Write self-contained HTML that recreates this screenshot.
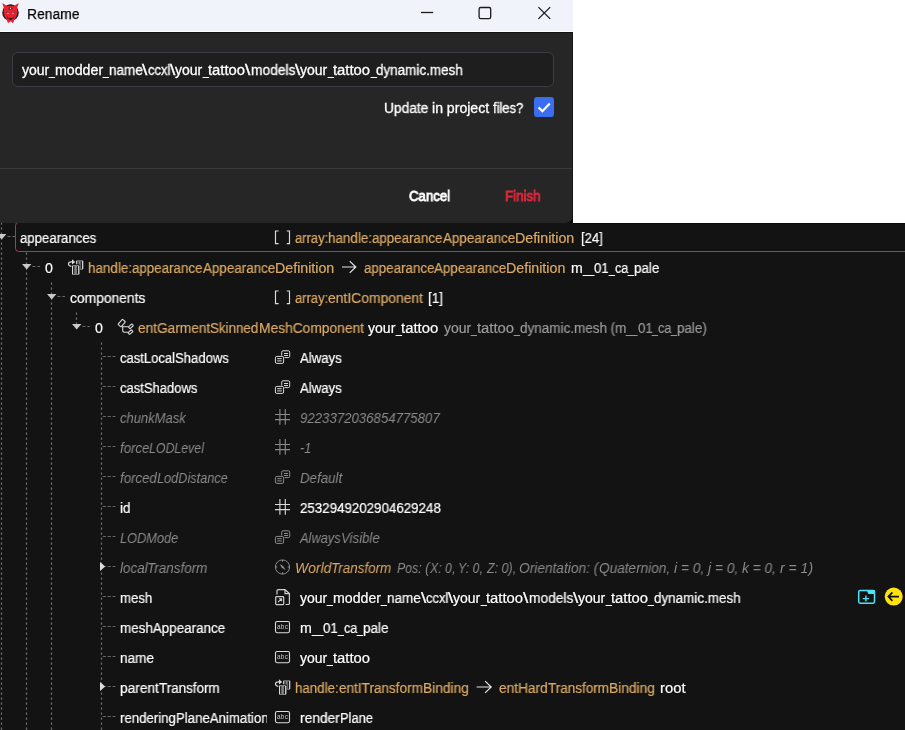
<!DOCTYPE html>
<html><head><meta charset="utf-8"><title>Rename</title>
<style>
html,body{margin:0;padding:0}
body{width:905px;height:730px;position:relative;overflow:hidden;background:#fff;font-family:"Liberation Sans",sans-serif;font-size:14px}
#tree{position:absolute;left:0;top:222.8px;width:905px;height:508px;background:#131313;overflow:hidden}
#sel{position:absolute;left:14.9px;top:-0.8px;width:900px;height:30px;border:1.25px solid #dc2637;border-radius:3.5px;box-sizing:border-box}
#dlg{position:absolute;left:0;top:0;width:573px;height:222.8px;background:#262626;border-radius:0 0 8px 0;overflow:hidden}
#edge{position:absolute;left:572px;top:32px;width:1px;height:191px;background:#151515}
#corner{position:absolute;left:555px;top:205px;width:18px;height:18px;background:#0b0b0b}
#shade{position:absolute;left:573px;top:222.7px;width:332px;height:1.1px;background:#0a0a0a}
#bar{position:absolute;left:0;top:0;width:573px;height:30.6px;background:#f0f3f9;border-bottom:1.2px solid #fdfdff;box-shadow:0 0.8px 0 #0e0e0e}
#inp{position:absolute;left:12px;top:52px;width:542px;height:34.5px;box-sizing:border-box;border:1px solid #3c3c44;border-radius:6px;background:#1e1e1e}
#sep{position:absolute;left:0;top:168px;width:573px;height:1px;background:#3b3b3b}
.t{will-change:transform;font-size:14px;-webkit-text-stroke:0.2px;position:absolute;white-space:pre;line-height:20px;height:20px;transform-origin:0 50%}
#clip{position:absolute;left:118px;top:708px;width:148.9px;height:22px;overflow:hidden}
#clip .t{left:2.2px;top:0;color:#ffffff;transform:scaleX(0.945)}
svg{position:absolute;left:0;top:0;will-change:transform}
</style></head>
<body>
<div id="tree"><div id="sel"></div></div>
<div id="corner"></div><div id="shade"></div>
<div id="dlg"><div id="bar"></div><div id="inp"></div><div id="sep"></div><div id="edge"></div></div>
<svg width="905" height="730" viewBox="0 0 905 730">
<line x1="1.5" y1="223" x2="1.5" y2="730" stroke="#727272" stroke-width="1.2" stroke-dasharray="2.2 2.8" stroke-dashoffset="0.40"/>
<line x1="26.5" y1="252.5" x2="26.5" y2="730" stroke="#727272" stroke-width="1.2" stroke-dasharray="2.2 2.8" stroke-dashoffset="4.90"/>
<line x1="51.5" y1="282.5" x2="51.5" y2="730" stroke="#727272" stroke-width="1.2" stroke-dasharray="2.2 2.8" stroke-dashoffset="4.90"/>
<line x1="76.5" y1="312.5" x2="76.5" y2="324" stroke="#727272" stroke-width="1.2" stroke-dasharray="2.2 2.8" stroke-dashoffset="4.90"/>
<line x1="101.5" y1="342.5" x2="101.5" y2="730" stroke="#727272" stroke-width="1.2" stroke-dasharray="2.2 2.8" stroke-dashoffset="4.90"/>
<line x1="7.4" y1="236.5" x2="15" y2="236.5" stroke="#666666" stroke-width="1.2" stroke-dasharray="3.1 1.8"/>
<line x1="32.4" y1="266.5" x2="40" y2="266.5" stroke="#666666" stroke-width="1.2" stroke-dasharray="3.1 1.8"/>
<line x1="57.4" y1="296.5" x2="65" y2="296.5" stroke="#666666" stroke-width="1.2" stroke-dasharray="3.1 1.8"/>
<line x1="82.4" y1="326.5" x2="90" y2="326.5" stroke="#666666" stroke-width="1.2" stroke-dasharray="3.1 1.8"/>
<line x1="102.8" y1="356.5" x2="115.4" y2="356.5" stroke="#666666" stroke-width="1.2" stroke-dasharray="3.1 1.8"/>
<line x1="102.8" y1="386.5" x2="115.4" y2="386.5" stroke="#666666" stroke-width="1.2" stroke-dasharray="3.1 1.8"/>
<line x1="102.8" y1="416.5" x2="115.4" y2="416.5" stroke="#666666" stroke-width="1.2" stroke-dasharray="3.1 1.8"/>
<line x1="102.8" y1="446.5" x2="115.4" y2="446.5" stroke="#666666" stroke-width="1.2" stroke-dasharray="3.1 1.8"/>
<line x1="102.8" y1="476.5" x2="115.4" y2="476.5" stroke="#666666" stroke-width="1.2" stroke-dasharray="3.1 1.8"/>
<line x1="102.8" y1="506.5" x2="115.4" y2="506.5" stroke="#666666" stroke-width="1.2" stroke-dasharray="3.1 1.8"/>
<line x1="102.8" y1="536.5" x2="115.4" y2="536.5" stroke="#666666" stroke-width="1.2" stroke-dasharray="3.1 1.8"/>
<line x1="102.8" y1="566.5" x2="115.4" y2="566.5" stroke="#666666" stroke-width="1.2" stroke-dasharray="3.1 1.8"/>
<line x1="102.8" y1="596.5" x2="115.4" y2="596.5" stroke="#666666" stroke-width="1.2" stroke-dasharray="3.1 1.8"/>
<line x1="102.8" y1="626.5" x2="115.4" y2="626.5" stroke="#666666" stroke-width="1.2" stroke-dasharray="3.1 1.8"/>
<line x1="102.8" y1="656.5" x2="115.4" y2="656.5" stroke="#666666" stroke-width="1.2" stroke-dasharray="3.1 1.8"/>
<line x1="102.8" y1="686.5" x2="115.4" y2="686.5" stroke="#666666" stroke-width="1.2" stroke-dasharray="3.1 1.8"/>
<line x1="102.8" y1="716.5" x2="115.4" y2="716.5" stroke="#666666" stroke-width="1.2" stroke-dasharray="3.1 1.8"/>
<polygon points="-3.0,234 6.4,234 1.7,239.4" fill="#c8c8c8"/>
<polygon points="22.0,264 31.4,264 26.7,269.4" fill="#c8c8c8"/>
<polygon points="47.0,294 56.400000000000006,294 51.7,299.4" fill="#c8c8c8"/>
<polygon points="72.0,324 81.4,324 76.7,329.4" fill="#c8c8c8"/>
<polygon points="100,562.0 105.2,566.5 100,571.0" fill="#dddddd"/>
<polygon points="100,682.0 105.2,686.5 100,691.0" fill="#dddddd"/>
<path d="M278.6,231 H275.5 V243.6 H278.6 M286.8,231 H289.5 V243.6 H286.8" fill="none" stroke="#dcdcdc" stroke-width="1.15"/>
<path d="M278.6,291 H275.5 V303.6 H278.6 M286.8,291 H289.5 V303.6 H286.8" fill="none" stroke="#dcdcdc" stroke-width="1.15"/>
<g transform="translate(0,0)"><rect x="76.2" y="260.2" width="7" height="9.6" rx="1.2" fill="#838383"/><rect x="77.3" y="261.3" width="1.2" height="8" fill="#131313"/><rect x="80.7" y="261.3" width="1.2" height="7.4" fill="#131313"/><rect x="76.2" y="260.9" width="1" height="8.2" fill="#dcdcdc"/><rect x="82.1" y="260.9" width="1.1" height="8.2" fill="#dcdcdc"/><rect x="71.2" y="264.3" width="8.8" height="11.4" rx="1.4" fill="#131313"/><rect x="72" y="265.1" width="7.3" height="9.9" rx="1.2" fill="#838383"/><rect x="73.1" y="266.2" width="1.2" height="7.7" fill="#131313"/><rect x="76.9" y="266.2" width="1.2" height="7.7" fill="#131313"/><rect x="72" y="265.9" width="1.05" height="8.3" fill="#dcdcdc"/><rect x="78.2" y="265.9" width="1.1" height="8.3" fill="#dcdcdc"/><path d="M71.3,266.4 C67.4,265.8 67.4,261.7 72,261.9" stroke="#dcdcdc" stroke-width="1.15" fill="none"/><polygon points="72,259.3 75.2,262 72,264.6" fill="#dcdcdc"/></g>
<g transform="translate(207,420)"><rect x="76.2" y="260.2" width="7" height="9.6" rx="1.2" fill="#838383"/><rect x="77.3" y="261.3" width="1.2" height="8" fill="#131313"/><rect x="80.7" y="261.3" width="1.2" height="7.4" fill="#131313"/><rect x="76.2" y="260.9" width="1" height="8.2" fill="#dcdcdc"/><rect x="82.1" y="260.9" width="1.1" height="8.2" fill="#dcdcdc"/><rect x="71.2" y="264.3" width="8.8" height="11.4" rx="1.4" fill="#131313"/><rect x="72" y="265.1" width="7.3" height="9.9" rx="1.2" fill="#838383"/><rect x="73.1" y="266.2" width="1.2" height="7.7" fill="#131313"/><rect x="76.9" y="266.2" width="1.2" height="7.7" fill="#131313"/><rect x="72" y="265.9" width="1.05" height="8.3" fill="#dcdcdc"/><rect x="78.2" y="265.9" width="1.1" height="8.3" fill="#dcdcdc"/><path d="M71.3,266.4 C67.4,265.8 67.4,261.7 72,261.9" stroke="#dcdcdc" stroke-width="1.15" fill="none"/><polygon points="72,259.3 75.2,262 72,264.6" fill="#dcdcdc"/></g>
<g transform="translate(0,0)" fill="none" stroke="#dcdcdc" stroke-width="1.1"><rect x="-3.4" y="-2" width="6.8" height="4" rx="0.6" transform="translate(121.7,323.1) rotate(-48)"/><path d="M122.7,326 V330.6 Q122.7,332.3 124.4,332.3 H128 M122.7,326.7 H128.2"/><rect x="-2.3" y="-1.2" width="4.6" height="2.4" rx="0.5" transform="translate(130.9,326.3) rotate(-42)"/><rect x="-2.3" y="-1.2" width="4.6" height="2.4" rx="0.5" transform="translate(130.5,332.1) rotate(-42)"/></g>
<g transform="translate(0,0)" fill="none" stroke="#dcdcdc" stroke-width="1"><rect x="281.7" y="350.8" width="8" height="6.8" rx="1.4"/><path d="M284,353.5 H288 M284,355.5 H288"/><rect x="274.9" y="355.4" width="9.6" height="9" rx="1.4" fill="#131313" stroke="none"/><rect x="275.4" y="356.4" width="8.2" height="7" rx="1.4"/><path d="M277.2,358.7 H281.8 M277.2,360.9 H281.8"/></g>
<g transform="translate(0,30)" fill="none" stroke="#dcdcdc" stroke-width="1"><rect x="281.7" y="350.8" width="8" height="6.8" rx="1.4"/><path d="M284,353.5 H288 M284,355.5 H288"/><rect x="274.9" y="355.4" width="9.6" height="9" rx="1.4" fill="#131313" stroke="none"/><rect x="275.4" y="356.4" width="8.2" height="7" rx="1.4"/><path d="M277.2,358.7 H281.8 M277.2,360.9 H281.8"/></g>
<g transform="translate(0,120)" fill="none" stroke="#8c8c8c" stroke-width="1"><rect x="281.7" y="350.8" width="8" height="6.8" rx="1.4"/><path d="M284,353.5 H288 M284,355.5 H288"/><rect x="274.9" y="355.4" width="9.6" height="9" rx="1.4" fill="#131313" stroke="none"/><rect x="275.4" y="356.4" width="8.2" height="7" rx="1.4"/><path d="M277.2,358.7 H281.8 M277.2,360.9 H281.8"/></g>
<g transform="translate(0,180)" fill="none" stroke="#8c8c8c" stroke-width="1"><rect x="281.7" y="350.8" width="8" height="6.8" rx="1.4"/><path d="M284,353.5 H288 M284,355.5 H288"/><rect x="274.9" y="355.4" width="9.6" height="9" rx="1.4" fill="#131313" stroke="none"/><rect x="275.4" y="356.4" width="8.2" height="7" rx="1.4"/><path d="M277.2,358.7 H281.8 M277.2,360.9 H281.8"/></g>
<path d="M275,414.5 H290 M275,419.6 H290 M279.9,409 V424.8 M285.3,409 V424.8" stroke="#8c8c8c" stroke-width="1.1" fill="none"/>
<path d="M275,444.5 H290 M275,449.6 H290 M279.9,439 V454.8 M285.3,439 V454.8" stroke="#8c8c8c" stroke-width="1.1" fill="none"/>
<path d="M275,504.5 H290 M275,509.6 H290 M279.9,499 V514.8 M285.3,499 V514.8" stroke="#dcdcdc" stroke-width="1.1" fill="none"/>
<g fill="none" stroke="#8c8c8c" stroke-width="1"><circle cx="282.5" cy="567" r="7.1"/><path d="M282.5,560 v1.8 M282.5,574 v-1.8 M275.5,567 h1.8 M289.5,567 h-1.8" stroke-width="1"/><path d="M279.6,564 L283.4,566.2 L285.6,570 L281.7,567.8 Z" fill="#8c8c8c" stroke="none"/></g>
<g transform="translate(0,0)" fill="none" stroke="#cfcfcf" stroke-width="1.2"><path d="M277,594.6 V590.8 Q277,589.7 278.1,589.7 H285 L289.4,593.6 V603.4 Q289.4,604.5 288.3,604.5 H285.6"/><path d="M285,589.9 V593.6 H289.3"/><rect x="275.7" y="596.6" width="8" height="8" rx="0.8"/><path d="M278,602.2 L281.5,598.8 M279,598.7 H281.6 V601.3" stroke-width="1.1"/></g>
<rect x="275.5" y="621.5" width="14" height="11.2" rx="1.6" fill="none" stroke="#dcdcdc" stroke-width="1.1"/>
<text x="282.6" y="629.2" font-family="Liberation Sans, sans-serif" font-size="6.4" fill="#c8c8c8" text-anchor="middle" letter-spacing="0.3">abc</text>
<rect x="275.5" y="651.5" width="14" height="11.2" rx="1.6" fill="none" stroke="#dcdcdc" stroke-width="1.1"/>
<text x="282.6" y="659.2" font-family="Liberation Sans, sans-serif" font-size="6.4" fill="#c8c8c8" text-anchor="middle" letter-spacing="0.3">abc</text>
<rect x="275.5" y="711.5" width="14" height="11.2" rx="1.6" fill="none" stroke="#dcdcdc" stroke-width="1.1"/>
<text x="282.6" y="719.2" font-family="Liberation Sans, sans-serif" font-size="6.4" fill="#c8c8c8" text-anchor="middle" letter-spacing="0.3">abc</text>
<path d="M342,267 H356 M349.7,261.1 L355.8,267 L349.7,272.9" fill="none" stroke="#e6e6e6" stroke-width="1.2"/>
<path d="M476.6,687 H491.4 M485.09999999999997,681.1 L491.2,687 L485.09999999999997,692.9" fill="none" stroke="#e6e6e6" stroke-width="1.2"/>
<g><rect x="858.7" y="590.4" width="15.8" height="12.8" rx="1.4" fill="none" stroke="#4fe3f7" stroke-width="1.5"/><path d="M866.6,590 H875 V594 H868.4 Z" fill="#4fe3f7"/><path d="M862.8,598.6 H869 M865.9,595.6 V601.6" stroke="#4fe3f7" stroke-width="1.4" fill="none"/></g>
<circle cx="893.7" cy="596.6" r="9" fill="#ffe30f"/><path d="M888.6,596.6 H899 M892.4,592.4 L888.4,596.6 L892.4,600.8" stroke="#111" stroke-width="1.7" fill="none"/>
<path d="M421,12.5 H433.2" stroke="#1a1a1a" stroke-width="1.3"/>
<rect x="479.1" y="7.5" width="11.6" height="11.2" rx="1.6" fill="none" stroke="#1a1a1a" stroke-width="1.3"/>
<path d="M538.4,7.1 L550.2,18.9 M550.2,7.1 L538.4,18.9" stroke="#1a1a1a" stroke-width="1.3"/>
<rect x="534" y="97" width="20" height="20" rx="3" fill="#3a6df0"/><path d="M538.6,107.4 L542.4,111.2 L549.8,103.4" fill="none" stroke="#fff" stroke-width="2.2"/>
<g><circle cx="10.5" cy="12.7" r="8.3" fill="#222"/><path d="M2.2,3 L7.4,6.2 Q10.5,5.4 13.6,6.2 L18.8,3 L16.9,8.6 Q18.1,12.4 16.4,16.2 L14.3,19.4 L13.4,22.4 L12.5,23.1 L11.6,22 L10.5,21.3 L9.4,22 L8.5,23.1 L7.6,22.4 L6.7,19.4 L4.6,16.2 Q2.9,12.4 4.1,8.6 Z" fill="#e8212f"/><path d="M7,5.7 Q10.5,3.3 14,5.7 Q10.5,6.3 7,5.7 Z" fill="#222"/><ellipse cx="10.5" cy="8.6" rx="2" ry="1.05" fill="#5a1218"/><circle cx="10.5" cy="8.55" r="0.7" fill="#e6e6e6"/><path d="M6,12.3 Q8,11.4 9.8,13 Q8,14.4 6,13.6 Z" fill="#5a1218" opacity="0.7"/><path d="M15,12.3 Q13,11.4 11.2,13 Q13,14.4 15,13.6 Z" fill="#5a1218" opacity="0.7"/><ellipse cx="7.9" cy="13.3" rx="1.4" ry="0.7" fill="#a8a8a8"/><ellipse cx="13.1" cy="13.3" rx="1.4" ry="0.7" fill="#a8a8a8"/><path d="M8.4,17.8 Q10.5,18.4 12.6,17.8 Q12,19.9 10.5,19.9 Q9,19.9 8.4,17.8 Z" fill="#1d1d1d"/><path d="M7,16.6 Q7.4,18.4 8.6,19.2 M14,16.6 Q13.6,18.4 12.4,19.2" stroke="#5a1218" stroke-width="0.7" fill="none"/></g>
</svg>
<div><span class="t" style="left:27.4px;top:4.4px;color:#000000;transform:scaleX(0.8960);font-size:15.5px;-webkit-text-stroke:0.25px;">Rename</span></div>
<div><span class="t" style="left:21.8px;top:60.0px;color:#ffffff;transform:scaleX(1.0023);-webkit-text-stroke:0.3px;">your</span><span class="t" style="left:49.0px;top:60.0px;color:#ffffff;transform:scaleX(0.7323);-webkit-text-stroke:0.3px;">_</span><span class="t" style="left:54.8px;top:60.0px;color:#ffffff;transform:scaleX(1.0133);-webkit-text-stroke:0.3px;">modder</span><span class="t" style="left:102.9px;top:60.0px;color:#ffffff;transform:scaleX(0.7323);-webkit-text-stroke:0.3px;">_</span><span class="t" style="left:108.6px;top:60.0px;color:#ffffff;transform:scaleX(0.9658);-webkit-text-stroke:0.3px;">name</span><span class="t" style="left:142.4px;top:60.0px;color:#ffffff;transform:scaleX(1.3579);-webkit-text-stroke:0.3px;">\</span><span class="t" style="left:147.7px;top:60.0px;color:#ffffff;transform:scaleX(0.9267);-webkit-text-stroke:0.3px;">ccxl</span><span class="t" style="left:170.0px;top:60.0px;color:#ffffff;transform:scaleX(1.3579);-webkit-text-stroke:0.3px;">\</span><span class="t" style="left:175.3px;top:60.0px;color:#ffffff;transform:scaleX(1.0023);-webkit-text-stroke:0.3px;">your</span><span class="t" style="left:202.6px;top:60.0px;color:#ffffff;transform:scaleX(0.7323);-webkit-text-stroke:0.3px;">_</span><span class="t" style="left:208.3px;top:60.0px;color:#ffffff;transform:scaleX(1.0596);-webkit-text-stroke:0.3px;">tattoo</span><span class="t" style="left:245.4px;top:60.0px;color:#ffffff;transform:scaleX(1.3579);-webkit-text-stroke:0.3px;">\</span><span class="t" style="left:250.7px;top:60.0px;color:#ffffff;transform:scaleX(0.9829);-webkit-text-stroke:0.3px;">models</span><span class="t" style="left:295.1px;top:60.0px;color:#ffffff;transform:scaleX(1.3579);-webkit-text-stroke:0.3px;">\</span><span class="t" style="left:300.4px;top:60.0px;color:#ffffff;transform:scaleX(1.0023);-webkit-text-stroke:0.3px;">your</span><span class="t" style="left:327.7px;top:60.0px;color:#ffffff;transform:scaleX(0.7323);-webkit-text-stroke:0.3px;">_</span><span class="t" style="left:333.4px;top:60.0px;color:#ffffff;transform:scaleX(1.0596);-webkit-text-stroke:0.3px;">tattoo</span><span class="t" style="left:370.5px;top:60.0px;color:#ffffff;transform:scaleX(0.7323);-webkit-text-stroke:0.3px;">_</span><span class="t" style="left:376.2px;top:60.0px;color:#ffffff;transform:scaleX(0.9609);-webkit-text-stroke:0.3px;">dynamic.mesh</span></div>
<div><span class="t" style="left:383.9px;top:97.5px;color:#ffffff;transform:scaleX(0.9829);-webkit-text-stroke:0.3px;">Update </span><span class="t" style="left:432.2px;top:97.5px;color:#ffffff;transform:scaleX(1.0057);-webkit-text-stroke:0.3px;">in project </span><span class="t" style="left:493.2px;top:97.5px;color:#ffffff;transform:scaleX(0.9221);-webkit-text-stroke:0.3px;">files?</span></div>
<div><span class="t" style="left:409.4px;top:186.0px;color:#ffffff;transform:scaleX(0.9428);-webkit-text-stroke:0.85px;">Cancel</span></div>
<div><span class="t" style="left:505.4px;top:186.0px;color:#e0283c;transform:scaleX(0.9529);-webkit-text-stroke:0.85px;">Finish</span></div>
<div><span class="t" style="left:19.9px;top:228.0px;color:#ffffff;transform:scaleX(0.9413);">appearances</span></div>
<div><span class="t" style="left:294.9px;top:228.0px;color:#dcaa64;transform:scaleX(0.9257);">array:</span><span class="t" style="left:328.1px;top:228.0px;color:#dcaa64;transform:scaleX(0.9594);">handle:</span><span class="t" style="left:372.2px;top:228.0px;color:#dcaa64;transform:scaleX(0.9509);">appearance</span><span class="t" style="left:442.5px;top:228.0px;color:#dcaa64;transform:scaleX(0.9559);">Appearance</span><span class="t" style="left:514.7px;top:228.0px;color:#dcaa64;transform:scaleX(1.0155);">Definition</span></div>
<div><span class="t" style="left:580.5px;top:228.0px;color:#ffffff;transform:scaleX(0.9290);">[24]</span></div>
<div><span class="t" style="left:44.5px;top:258.0px;color:#ffffff;transform:scaleX(1.0132);">0</span></div>
<div><span class="t" style="left:88.1px;top:258.0px;color:#dcaa64;transform:scaleX(0.9596);">handle:</span><span class="t" style="left:132.2px;top:258.0px;color:#dcaa64;transform:scaleX(0.9511);">appearance</span><span class="t" style="left:202.6px;top:258.0px;color:#dcaa64;transform:scaleX(0.9561);">Appearance</span><span class="t" style="left:274.8px;top:258.0px;color:#dcaa64;transform:scaleX(1.0156);">Definition</span></div>
<div><span class="t" style="left:363.8px;top:258.0px;color:#dcaa64;transform:scaleX(0.9514);">appearance</span><span class="t" style="left:434.1px;top:258.0px;color:#dcaa64;transform:scaleX(0.9565);">Appearance</span><span class="t" style="left:506.3px;top:258.0px;color:#dcaa64;transform:scaleX(1.0160);">Definition</span></div>
<div><span class="t" style="left:571.3px;top:258.0px;color:#ffffff;transform:scaleX(1.0047);">m</span><span class="t" style="left:583.1px;top:258.0px;color:#ffffff;transform:scaleX(0.7256);">__</span><span class="t" style="left:594.4px;top:258.0px;color:#ffffff;transform:scaleX(0.9425);">01</span><span class="t" style="left:609.1px;top:258.0px;color:#ffffff;transform:scaleX(0.7249);">_</span><span class="t" style="left:614.7px;top:258.0px;color:#ffffff;transform:scaleX(0.8937);">ca</span><span class="t" style="left:627.9px;top:258.0px;color:#ffffff;transform:scaleX(0.7249);">_</span><span class="t" style="left:633.6px;top:258.0px;color:#ffffff;transform:scaleX(0.9581);">pale</span></div>
<div><span class="t" style="left:70.0px;top:288.0px;color:#ffffff;transform:scaleX(0.9884);">components</span></div>
<div><span class="t" style="left:294.9px;top:288.0px;color:#dcaa64;transform:scaleX(0.9250);">array:</span><span class="t" style="left:328.1px;top:288.0px;color:#dcaa64;transform:scaleX(0.9922);">entIComponent</span></div>
<div><span class="t" style="left:428.4px;top:288.0px;color:#ffffff;transform:scaleX(0.9565);">[1]</span></div>
<div><span class="t" style="left:94.5px;top:318.0px;color:#ffffff;transform:scaleX(1.0132);">0</span></div>
<div><span class="t" style="left:138.1px;top:318.0px;color:#dcaa64;transform:scaleX(0.9771);">entGarment</span><span class="t" style="left:210.3px;top:318.0px;color:#dcaa64;transform:scaleX(0.9539);">Skinned</span><span class="t" style="left:258.6px;top:318.0px;color:#dcaa64;transform:scaleX(0.9847);">MeshComponent</span></div>
<div><span class="t" style="left:368.2px;top:318.0px;color:#ffffff;transform:scaleX(1.0048);">your</span><span class="t" style="left:395.6px;top:318.0px;color:#ffffff;transform:scaleX(0.7341);">_</span><span class="t" style="left:401.3px;top:318.0px;color:#ffffff;transform:scaleX(1.0623);">tattoo</span></div>
<div><span class="t" style="left:443.9px;top:318.0px;color:#9a9a9a;transform:scaleX(1.0017);">your</span><span class="t" style="left:471.1px;top:318.0px;color:#9a9a9a;transform:scaleX(0.7319);">_</span><span class="t" style="left:476.8px;top:318.0px;color:#9a9a9a;transform:scaleX(1.0591);">tattoo</span><span class="t" style="left:513.9px;top:318.0px;color:#9a9a9a;transform:scaleX(0.7319);">_</span><span class="t" style="left:519.6px;top:318.0px;color:#9a9a9a;transform:scaleX(0.9645);">dynamic.</span><span class="t" style="left:573.7px;top:318.0px;color:#9a9a9a;transform:scaleX(0.9624);">mesh (m</span><span class="t" style="left:626.1px;top:318.0px;color:#9a9a9a;transform:scaleX(0.7326);">__</span><span class="t" style="left:637.5px;top:318.0px;color:#9a9a9a;transform:scaleX(0.9516);">01</span><span class="t" style="left:652.3px;top:318.0px;color:#9a9a9a;transform:scaleX(0.7319);">_</span><span class="t" style="left:658.0px;top:318.0px;color:#9a9a9a;transform:scaleX(0.9024);">ca</span><span class="t" style="left:671.4px;top:318.0px;color:#9a9a9a;transform:scaleX(0.7319);">_</span><span class="t" style="left:677.1px;top:318.0px;color:#9a9a9a;transform:scaleX(0.9556);">pale)</span></div>
<div><span class="t" style="left:120.0px;top:348.0px;color:#ffffff;transform:scaleX(0.9293);">castLocal</span><span class="t" style="left:174.9px;top:348.0px;color:#ffffff;transform:scaleX(0.9364);">Shadows</span></div>
<div><span class="t" style="left:299.8px;top:348.0px;color:#ffffff;transform:scaleX(0.9423);">Always</span></div>
<div><span class="t" style="left:120.0px;top:378.0px;color:#ffffff;transform:scaleX(0.9294);">castShadows</span></div>
<div><span class="t" style="left:299.8px;top:378.0px;color:#ffffff;transform:scaleX(0.9423);">Always</span></div>
<div><span class="t" style="left:119.8px;top:408.0px;color:#8a8a8a;transform:scaleX(0.9292);font-style:italic;-webkit-text-stroke:0;">chunkMask</span></div>
<div><span class="t" style="left:299.9px;top:408.0px;color:#8a8a8a;transform:scaleX(0.9443);font-style:italic;-webkit-text-stroke:0;">9223372036854775807</span></div>
<div><span class="t" style="left:119.8px;top:438.0px;color:#8a8a8a;transform:scaleX(0.9452);font-style:italic;-webkit-text-stroke:0;">force</span><span class="t" style="left:149.3px;top:438.0px;color:#8a8a8a;transform:scaleX(0.8814);font-style:italic;-webkit-text-stroke:0;">LODLevel</span></div>
<div><span class="t" style="left:300.4px;top:438.0px;color:#8a8a8a;transform:scaleX(0.8994);font-style:italic;-webkit-text-stroke:0;">-1</span></div>
<div><span class="t" style="left:119.8px;top:468.0px;color:#8a8a8a;transform:scaleX(0.9481);font-style:italic;-webkit-text-stroke:0;">forced</span><span class="t" style="left:156.8px;top:468.0px;color:#8a8a8a;transform:scaleX(0.9097);font-style:italic;-webkit-text-stroke:0;">LodDistance</span></div>
<div><span class="t" style="left:300.4px;top:468.0px;color:#8a8a8a;transform:scaleX(0.9513);font-style:italic;-webkit-text-stroke:0;">Default</span></div>
<div><span class="t" style="left:120.0px;top:498.0px;color:#ffffff;transform:scaleX(0.9719);">id</span></div>
<div><span class="t" style="left:299.6px;top:498.0px;color:#ffffff;transform:scaleX(0.9518);">2532949202904629248</span></div>
<div><span class="t" style="left:119.8px;top:528.0px;color:#8a8a8a;transform:scaleX(0.9120);font-style:italic;-webkit-text-stroke:0;">LODMode</span></div>
<div><span class="t" style="left:299.9px;top:528.0px;color:#8a8a8a;transform:scaleX(0.9181);font-style:italic;-webkit-text-stroke:0;">Always</span><span class="t" style="left:340.6px;top:528.0px;color:#8a8a8a;transform:scaleX(0.9457);font-style:italic;-webkit-text-stroke:0;">Visible</span></div>
<div><span class="t" style="left:119.8px;top:558.0px;color:#8a8a8a;transform:scaleX(0.9555);font-style:italic;-webkit-text-stroke:0;">local</span><span class="t" style="left:147.4px;top:558.0px;color:#8a8a8a;transform:scaleX(0.9623);font-style:italic;-webkit-text-stroke:0;">Transform</span></div>
<div><span class="t" style="left:294.6px;top:558.0px;color:#dcaa64;transform:scaleX(0.9934);font-style:italic;-webkit-text-stroke:0;">World</span><span class="t" style="left:330.9px;top:558.0px;color:#dcaa64;transform:scaleX(0.9606);font-style:italic;-webkit-text-stroke:0;">Transform</span></div>
<div><span class="t" style="left:397.2px;top:558.0px;color:#8a8a8a;transform:scaleX(0.8820);font-style:italic;-webkit-text-stroke:0;">Pos: (</span><span class="t" style="left:429.5px;top:558.0px;color:#8a8a8a;transform:scaleX(0.8817);font-style:italic;-webkit-text-stroke:0;">X: 0, </span><span class="t" style="left:458.3px;top:558.0px;color:#8a8a8a;transform:scaleX(0.8801);font-style:italic;-webkit-text-stroke:0;">Y: 0, </span><span class="t" style="left:486.6px;top:558.0px;color:#8a8a8a;transform:scaleX(0.8936);font-style:italic;-webkit-text-stroke:0;">Z: 0), </span><span class="t" style="left:519.3px;top:558.0px;color:#8a8a8a;transform:scaleX(0.9795);font-style:italic;-webkit-text-stroke:0;">Orientation: (</span><span class="t" style="left:598.6px;top:558.0px;color:#8a8a8a;transform:scaleX(0.9726);font-style:italic;-webkit-text-stroke:0;">Quaternion, </span><span class="t" style="left:673.6px;top:558.0px;color:#8a8a8a;transform:scaleX(0.9869);font-style:italic;-webkit-text-stroke:0;">i = 0, </span><span class="t" style="left:707.7px;top:558.0px;color:#8a8a8a;transform:scaleX(0.9869);font-style:italic;-webkit-text-stroke:0;">j = 0, </span><span class="t" style="left:741.9px;top:558.0px;color:#8a8a8a;transform:scaleX(0.9776);font-style:italic;-webkit-text-stroke:0;">k = 0, </span><span class="t" style="left:779.6px;top:558.0px;color:#8a8a8a;transform:scaleX(0.9993);font-style:italic;-webkit-text-stroke:0;">r = 1)</span></div>
<div><span class="t" style="left:120.0px;top:588.0px;color:#ffffff;transform:scaleX(0.9406);">mesh</span></div>
<div><span class="t" style="left:300.1px;top:588.0px;color:#ffffff;transform:scaleX(1.0009);">your</span><span class="t" style="left:327.3px;top:588.0px;color:#ffffff;transform:scaleX(0.7313);">_</span><span class="t" style="left:333.0px;top:588.0px;color:#ffffff;transform:scaleX(1.0119);">modder</span><span class="t" style="left:381.0px;top:588.0px;color:#ffffff;transform:scaleX(0.7313);">_</span><span class="t" style="left:386.7px;top:588.0px;color:#ffffff;transform:scaleX(0.9644);">name</span><span class="t" style="left:420.5px;top:588.0px;color:#ffffff;transform:scaleX(1.3561);">\</span><span class="t" style="left:425.8px;top:588.0px;color:#ffffff;transform:scaleX(0.9255);">ccxl</span><span class="t" style="left:448.1px;top:588.0px;color:#ffffff;transform:scaleX(1.3561);">\</span><span class="t" style="left:453.4px;top:588.0px;color:#ffffff;transform:scaleX(1.0009);">your</span><span class="t" style="left:480.7px;top:588.0px;color:#ffffff;transform:scaleX(0.7313);">_</span><span class="t" style="left:486.4px;top:588.0px;color:#ffffff;transform:scaleX(1.0582);">tattoo</span><span class="t" style="left:523.4px;top:588.0px;color:#ffffff;transform:scaleX(1.3561);">\</span><span class="t" style="left:528.7px;top:588.0px;color:#ffffff;transform:scaleX(0.9816);">models</span><span class="t" style="left:573.0px;top:588.0px;color:#ffffff;transform:scaleX(1.3561);">\</span><span class="t" style="left:578.3px;top:588.0px;color:#ffffff;transform:scaleX(1.0009);">your</span><span class="t" style="left:605.6px;top:588.0px;color:#ffffff;transform:scaleX(0.7313);">_</span><span class="t" style="left:611.3px;top:588.0px;color:#ffffff;transform:scaleX(1.0582);">tattoo</span><span class="t" style="left:648.3px;top:588.0px;color:#ffffff;transform:scaleX(0.7313);">_</span><span class="t" style="left:654.0px;top:588.0px;color:#ffffff;transform:scaleX(0.9595);">dynamic.mesh</span></div>
<div><span class="t" style="left:120.0px;top:618.0px;color:#ffffff;transform:scaleX(0.9576);">meshAppearance</span></div>
<div><span class="t" style="left:299.9px;top:618.0px;color:#ffffff;transform:scaleX(1.0115);">m</span><span class="t" style="left:311.8px;top:618.0px;color:#ffffff;transform:scaleX(0.7306);">__</span><span class="t" style="left:323.1px;top:618.0px;color:#ffffff;transform:scaleX(0.9489);">01</span><span class="t" style="left:337.9px;top:618.0px;color:#ffffff;transform:scaleX(0.7299);">_</span><span class="t" style="left:343.6px;top:618.0px;color:#ffffff;transform:scaleX(0.8999);">ca</span><span class="t" style="left:356.9px;top:618.0px;color:#ffffff;transform:scaleX(0.7299);">_</span><span class="t" style="left:362.6px;top:618.0px;color:#ffffff;transform:scaleX(0.9646);">pale</span></div>
<div><span class="t" style="left:120.0px;top:648.0px;color:#ffffff;transform:scaleX(0.9706);">name</span></div>
<div><span class="t" style="left:299.9px;top:648.0px;color:#ffffff;transform:scaleX(1.0005);">your</span><span class="t" style="left:327.2px;top:648.0px;color:#ffffff;transform:scaleX(0.7310);">_</span><span class="t" style="left:332.9px;top:648.0px;color:#ffffff;transform:scaleX(1.0577);">tattoo</span></div>
<div><span class="t" style="left:120.0px;top:678.0px;color:#ffffff;transform:scaleX(0.9793);">parent</span><span class="t" style="left:158.8px;top:678.0px;color:#ffffff;transform:scaleX(0.9579);">Transform</span></div>
<div><span class="t" style="left:295.1px;top:678.0px;color:#dcaa64;transform:scaleX(0.9508);">handle:</span><span class="t" style="left:338.7px;top:678.0px;color:#dcaa64;transform:scaleX(0.9690);">entITransform</span><span class="t" style="left:422.7px;top:678.0px;color:#dcaa64;transform:scaleX(0.9803);">Binding</span></div>
<div><span class="t" style="left:498.9px;top:678.0px;color:#dcaa64;transform:scaleX(0.9795);">entHard</span><span class="t" style="left:547.6px;top:678.0px;color:#dcaa64;transform:scaleX(0.9635);">Transform</span><span class="t" style="left:608.6px;top:678.0px;color:#dcaa64;transform:scaleX(0.9814);">Binding</span></div>
<div><span class="t" style="left:659.9px;top:678.0px;color:#ffffff;transform:scaleX(1.0570);">root</span></div>
<div><span class="t" style="left:299.9px;top:708.0px;color:#ffffff;transform:scaleX(0.9839);">render</span><span class="t" style="left:339.8px;top:708.0px;color:#ffffff;transform:scaleX(0.9210);">Plane</span></div>
<div id="clip"><span class="t">renderingPlaneAnimationParam</span></div>
</body></html>
